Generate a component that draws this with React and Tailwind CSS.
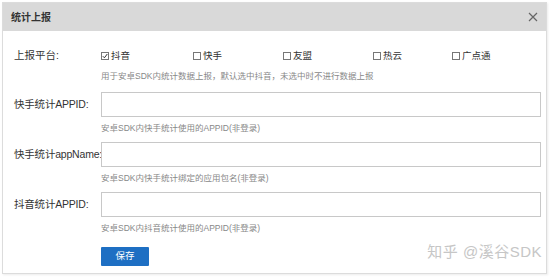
import React, { useState } from 'react';

const platforms = [
  { name: '抖音', w: 'w-[92px]' },
  { name: '快手', w: 'w-[90px]' },
  { name: '友盟', w: 'w-[90px]' },
  { name: '热云', w: 'w-[79px]' },
  { name: '广点通', w: 'w-[60px]' },
];

const fields = [
  { label: '快手统计APPID:', hint: '安卓SDK内快手统计使用的APPID(非登录)' },
  { label: '快手统计appName:', hint: '安卓SDK内快手统计绑定的应用包名(非登录)' },
  { label: '抖音统计APPID:', hint: '安卓SDK内抖音统计使用的APPID(非登录)' },
];

const Check = ({ checked }) => (
  <span className="w-[8px] h-[8px] border border-[#777] bg-white flex items-center justify-center">
    {checked && (
      <svg width="6" height="6" viewBox="0 0 6 6">
        <path d="M0.8 3.2 L2.4 4.8 L5.3 1" fill="none" stroke="#333" strokeWidth="1" />
      </svg>
    )}
  </span>
);

const App = () => {
  const [selected, setSelected] = useState(['抖音']);

  const toggle = (name) => {
    setSelected(selected.includes(name) ? selected.filter((n) => n !== name) : [...selected, name]);
  };

  return (
    <div className="w-[554px] h-[278px] bg-white pt-[2px] pl-[2px] font-['Liberation_Sans','Noto_Sans_CJK_SC',sans-serif] text-[#333]">
      <div className="w-[545px] h-[272px] border border-[#dcdcdc] shadow-[1px_1px_2px_rgba(0,0,0,0.08)] flex flex-col">
        <div className="h-[28px] bg-[#d9d9d9] flex items-center justify-between pl-[8px] pr-[8px]">
          <span className="text-[10px] font-bold text-[#333]">统计上报</span>
          <svg width="10" height="10" viewBox="0 0 10 10">
            <path d="M1 1 L9 9 M9 1 L1 9" stroke="#666" strokeWidth="1.2" />
          </svg>
        </div>

        <div className="relative flex-1 pl-[11px] pr-[4px]">
          <div className="flex items-center mt-[18px] h-[14px]">
            <span className="w-[87px] text-[10.5px]">上报平台:</span>
            {platforms.map((p) => (
              <label
                key={p.name}
                className={`${p.w} flex items-center gap-[2px] text-[9.5px] cursor-pointer`}
                onClick={() => toggle(p.name)}
              >
                <Check checked={selected.includes(p.name)} />
                <span>{p.name}</span>
              </label>
            ))}
          </div>
          <p className="ml-[87px] mt-[7px] h-[12px] leading-[12px] text-[8.5px] text-[#888]">
            用于安卓SDK内统计数据上报，默认选中抖音，未选中时不进行数据上报
          </p>

          <div className="mt-[10px]">
            {fields.map((f) => (
              <div key={f.label} className="mb-[8px]">
                <div className="flex items-center">
                  <span className="w-[87px] text-[10.5px] whitespace-nowrap tracking-[-0.2px]">{f.label}</span>
                  <input
                    type="text"
                    className="w-[440px] h-[25px] border border-[#c8c8c8] bg-white outline-none px-[4px] text-[10px]"
                  />
                </div>
                <p className="ml-[87px] mt-[5px] h-[12px] leading-[12px] text-[8.5px] text-[#888]">{f.hint}</p>
              </div>
            ))}
          </div>

          <button className="ml-[87px] mt-[-1px] w-[48px] h-[19px] bg-[#1e6fc3] text-white text-[9.5px] rounded-[1px]">
            保存
          </button>

          <span className="absolute right-[4px] bottom-[10px] text-[15px] text-[#c6c6c6] tracking-[0.5px]">
            知乎 @溪谷SDK
          </span>
        </div>
      </div>
    </div>
  );
};

export default App;
